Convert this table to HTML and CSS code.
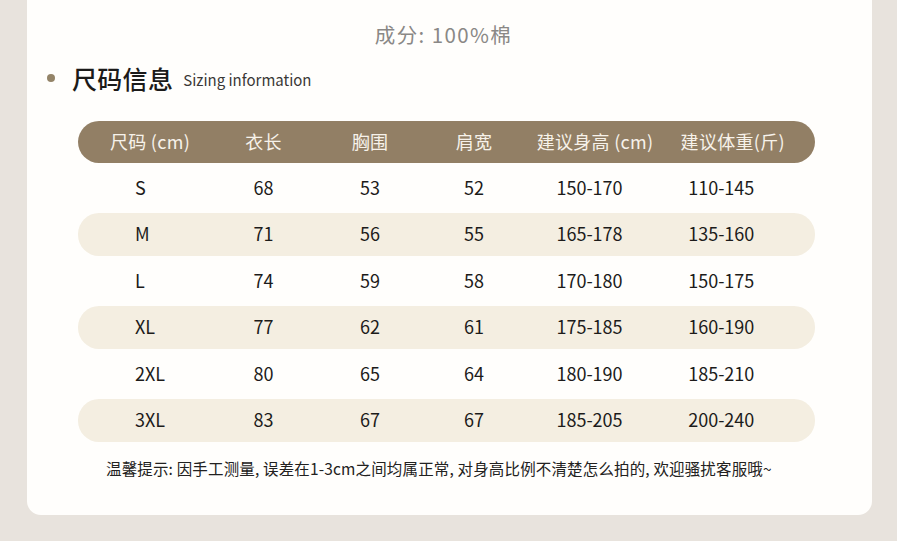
FILE: index.html
```html
<!DOCTYPE html>
<html lang="zh-CN">
<head>
<meta charset="utf-8">
<title>尺码信息</title>
<link rel="stylesheet" href="styles.css">
</head>
<body>
<div class="card">
  <div class="material">成分: 100%棉</div>
  <div class="title-row">
    <span class="dot"></span>
    <span class="title-cn">尺码信息</span>
    <span class="title-en">Sizing information</span>
  </div>
  <div class="table">
    <div class="row head">
      <div class="c c1">尺码 (cm)</div>
      <div class="c">衣长</div>
      <div class="c">胸围</div>
      <div class="c">肩宽</div>
      <div class="c">建议身高 (cm)</div>
      <div class="c">建议体重(斤)</div>
    </div>
    <div class="row">
      <div class="c c1 v1">S</div><div class="c">68</div><div class="c">53</div><div class="c">52</div><div class="c v5">150-170</div><div class="c v6">110-145</div>
    </div>
    <div class="row band">
      <div class="c c1 v1">M</div><div class="c">71</div><div class="c">56</div><div class="c">55</div><div class="c v5">165-178</div><div class="c v6">135-160</div>
    </div>
    <div class="row">
      <div class="c c1 v1">L</div><div class="c">74</div><div class="c">59</div><div class="c">58</div><div class="c v5">170-180</div><div class="c v6">150-175</div>
    </div>
    <div class="row band">
      <div class="c c1 v1">XL</div><div class="c">77</div><div class="c">62</div><div class="c">61</div><div class="c v5">175-185</div><div class="c v6">160-190</div>
    </div>
    <div class="row">
      <div class="c c1 v1">2XL</div><div class="c">80</div><div class="c">65</div><div class="c">64</div><div class="c v5">180-190</div><div class="c v6">185-210</div>
    </div>
    <div class="row band">
      <div class="c c1 v1">3XL</div><div class="c">83</div><div class="c">67</div><div class="c">67</div><div class="c v5">185-205</div><div class="c v6">200-240</div>
    </div>
  </div>
  <div class="note">温馨提示: 因手工测量, 误差在1-3cm之间均属正常, 对身高比例不清楚怎么拍的, 欢迎骚扰客服哦~</div>
</div>
</body>
</html>
```
FILE: styles.css
```css
* { box-sizing: border-box; }
html, body {
  margin: 0;
  padding: 0;
  background: #e8e3dd;
  font-family: "Noto Sans CJK SC", "Noto Sans", sans-serif;
}
body {
  width: 897px;
  height: 541px;
  overflow: hidden;
}
.card {
  margin-left: 27px;
  width: 845px;
  height: 515px;
  background: #fffefc;
  border-radius: 0 0 14px 14px;
  padding: 19px 57px 0 51px;
  display: flex;
  flex-direction: column;
}
.material {
  height: 30px;
  line-height: 30px;
  text-align: center;
  font-size: 20.5px;
  letter-spacing: 1.4px;
  color: #8a8886;
  margin-left: -6px;
}
.title-row {
  margin-top: 12px;
  height: 34px;
  display: flex;
  align-items: center;
  margin-left: -31px;
}
.dot {
  width: 8px;
  height: 8px;
  border-radius: 50%;
  background: #948468;
  margin-right: 17px;
}
.title-cn {
  font-size: 25px;
  font-weight: 500;
  color: #1b1a19;
  letter-spacing: 0.3px;
  line-height: 34px;
}
.title-en {
  font-size: 15px;
  color: #3a3836;
  margin-left: 10px;
  line-height: 34px;
  padding-top: 4px;
}
.table {
  margin-top: 26px;
  display: flex;
  flex-direction: column;
  gap: 3.5px;
}
.row {
  display: grid;
  grid-template-columns: 114px 113px 100px 108px 134px 141.5px;
  padding-left: 15px;
  height: 43px;
  align-items: center;
  border-radius: 21px;
  font-size: 18px;
  color: #1c1b1a;
}
.row.head {
  height: 42px;
  background: #927f65;
  color: #f7f2ea;
  font-size: 18px;
  letter-spacing: 0.3px;
}
.row.band {
  background: #f4eee1;
}
.c {
  text-align: center;
  white-space: nowrap;
  line-height: 24px;
  padding-bottom: 3px;
}
.v1 {
  text-align: left;
  padding-left: 42px;
}
.v5 { padding-right: 11px; }
.v6 { padding-right: 23px; }
.note {
  margin-top: 14px;
  line-height: 24px;
  font-size: 15.5px;
  letter-spacing: 0.15px;
  color: #222120;
  padding-left: 28px;
  white-space: nowrap;
}
```
